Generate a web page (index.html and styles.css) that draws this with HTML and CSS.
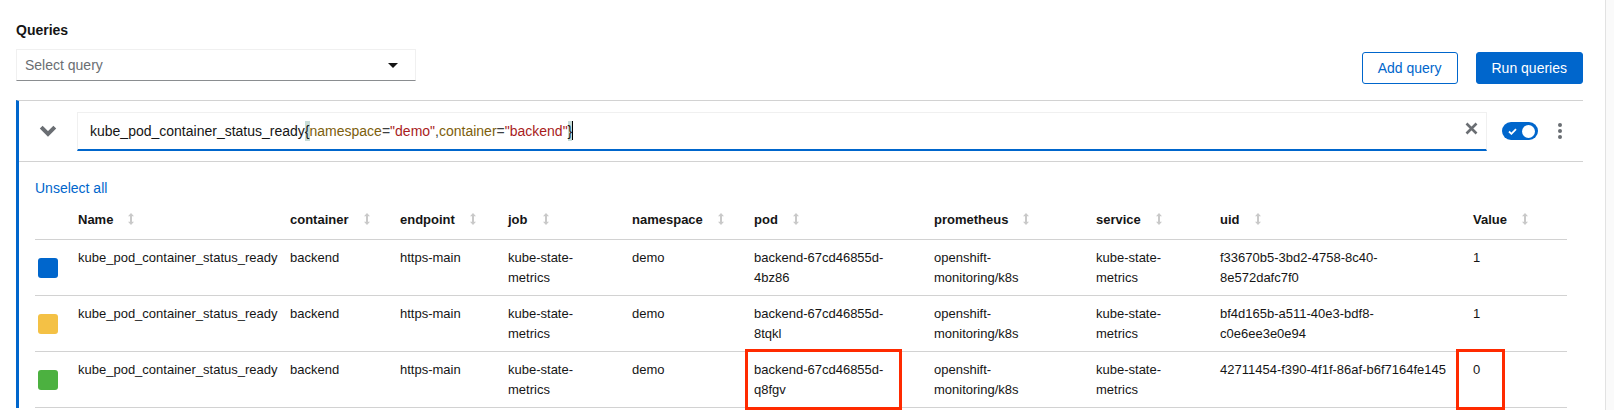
FILE: index.html
```html
<!DOCTYPE html>
<html lang="en">
<head>
<meta charset="utf-8">
<title>Queries</title>
<link rel="stylesheet" href="styles.css">
</head>
<body>
<div class="app">
  <main class="page">
    <div class="toolbar">
      <div class="select-group">
        <h2 class="title">Queries</h2>
        <div class="select">
          <span>Select query</span>
          <svg class="caret" width="10" height="5" viewBox="0 0 10 5"><path d="M0 0H10L5 5Z" fill="#151515"/></svg>
        </div>
      </div>
      <div class="actions">
        <button class="btn btn-secondary">Add query</button>
        <button class="btn btn-primary">Run queries</button>
      </div>
    </div>

    <section class="query-box">
      <div class="query-row">
        <button class="expand" aria-label="Collapse">
          <svg width="18" height="12" viewBox="0 0 18 12"><path d="M2.2 2.2L9 9L15.8 2.2" fill="none" stroke="#6a6e73" stroke-width="4"/></svg>
        </button>
        <div class="query-input">
          <div class="code"><span class="tok-metric">kube_pod_container_status_ready</span><span class="tok-brace">{</span><span class="tok-label">namespace</span><span class="tok-op">=</span><span class="tok-str">"demo"</span><span class="tok-op">,</span><span class="tok-label">container</span><span class="tok-op">=</span><span class="tok-str">"backend"</span><span class="tok-brace">}</span><span class="cursor"></span></div>
          <button class="clear" aria-label="Clear">
            <svg width="13" height="13" viewBox="0 0 13 13"><path d="M1.5 1.5L11.5 11.5M11.5 1.5L1.5 11.5" stroke="#6a6e73" stroke-width="2.6"/></svg>
          </button>
        </div>
        <div class="switch">
          <svg width="9" height="7" viewBox="0 0 9 7"><path d="M1 3.5L3.4 5.8L8 1.2" fill="none" stroke="#fff" stroke-width="1.8"/></svg>
          <span class="knob"></span>
        </div>
        <button class="kebab" aria-label="Actions"><span></span><span></span><span></span></button>
      </div>

      <div class="results">
        <button class="link">Unselect all</button>
        <table class="series">
          <colgroup>
            <col class="w-swatch"><col class="w-name"><col class="w-container"><col class="w-endpoint"><col class="w-job"><col class="w-namespace"><col class="w-pod"><col class="w-prom"><col class="w-service"><col class="w-uid"><col class="w-value">
          </colgroup>
          <thead>
            <tr>
              <th></th>
              <th>Name<svg class="sort" width="6" height="12" viewBox="0 0 6 12"><path d="M3 0L6 3.2H4V8.8H6L3 12L0 8.8H2V3.2H0Z"/></svg></th>
              <th>container<svg class="sort" width="6" height="12" viewBox="0 0 6 12"><path d="M3 0L6 3.2H4V8.8H6L3 12L0 8.8H2V3.2H0Z"/></svg></th>
              <th>endpoint<svg class="sort" width="6" height="12" viewBox="0 0 6 12"><path d="M3 0L6 3.2H4V8.8H6L3 12L0 8.8H2V3.2H0Z"/></svg></th>
              <th>job<svg class="sort" width="6" height="12" viewBox="0 0 6 12"><path d="M3 0L6 3.2H4V8.8H6L3 12L0 8.8H2V3.2H0Z"/></svg></th>
              <th>namespace<svg class="sort" width="6" height="12" viewBox="0 0 6 12"><path d="M3 0L6 3.2H4V8.8H6L3 12L0 8.8H2V3.2H0Z"/></svg></th>
              <th>pod<svg class="sort" width="6" height="12" viewBox="0 0 6 12"><path d="M3 0L6 3.2H4V8.8H6L3 12L0 8.8H2V3.2H0Z"/></svg></th>
              <th>prometheus<svg class="sort" width="6" height="12" viewBox="0 0 6 12"><path d="M3 0L6 3.2H4V8.8H6L3 12L0 8.8H2V3.2H0Z"/></svg></th>
              <th>service<svg class="sort" width="6" height="12" viewBox="0 0 6 12"><path d="M3 0L6 3.2H4V8.8H6L3 12L0 8.8H2V3.2H0Z"/></svg></th>
              <th>uid<svg class="sort" width="6" height="12" viewBox="0 0 6 12"><path d="M3 0L6 3.2H4V8.8H6L3 12L0 8.8H2V3.2H0Z"/></svg></th>
              <th>Value<svg class="sort" width="6" height="12" viewBox="0 0 6 12"><path d="M3 0L6 3.2H4V8.8H6L3 12L0 8.8H2V3.2H0Z"/></svg></th>
            </tr>
          </thead>
          <tbody>
            <tr>
              <td class="swatch-cell"><span class="swatch swatch-blue"></span></td>
              <td class="name-cell">kube_pod_container_status_ready</td>
              <td>backend</td>
              <td>https-main</td>
              <td>kube-state-metrics</td>
              <td>demo</td>
              <td>backend-67cd46855d-4bz86</td>
              <td>openshift-monitoring/k8s</td>
              <td>kube-state-metrics</td>
              <td class="uid-cell">f33670b5-3bd2-4758-8c40-8e572dafc7f0</td>
              <td>1</td>
            </tr>
            <tr>
              <td class="swatch-cell"><span class="swatch swatch-yellow"></span></td>
              <td class="name-cell">kube_pod_container_status_ready</td>
              <td>backend</td>
              <td>https-main</td>
              <td>kube-state-metrics</td>
              <td>demo</td>
              <td>backend-67cd46855d-8tqkl</td>
              <td>openshift-monitoring/k8s</td>
              <td>kube-state-metrics</td>
              <td class="uid-cell">bf4d165b-a511-40e3-bdf8-c0e6ee3e0e94</td>
              <td>1</td>
            </tr>
            <tr>
              <td class="swatch-cell"><span class="swatch swatch-green"></span></td>
              <td class="name-cell">kube_pod_container_status_ready</td>
              <td>backend</td>
              <td>https-main</td>
              <td>kube-state-metrics</td>
              <td>demo</td>
              <td class="flag flag-pod">backend-67cd46855d-q8fgv</td>
              <td>openshift-monitoring/k8s</td>
              <td>kube-state-metrics</td>
              <td class="uid-cell">42711454-f390-4f1f-86af-b6f7164fe145</td>
              <td class="flag flag-value">0</td>
            </tr>
          </tbody>
        </table>
      </div>
    </section>
  </main>
  <div class="scrollbar"></div>
</div>
</body>
</html>
```

FILE: styles.css
```css
* { box-sizing: border-box; }

html, body {
  margin: 0;
  height: 100%;
}

body {
  font-family: "Liberation Sans", Arial, sans-serif;
  color: #151515;
  background: #fff;
  overflow: hidden;
}

button {
  font-family: inherit;
  cursor: pointer;
}

.app {
  display: flex;
  height: 410px;
}

.page {
  flex: 1;
  min-width: 0;
  padding: 20px 22px 0 16px;
}

.scrollbar {
  width: 9px;
  border-left: 1px solid #e2e2e2;
  background: #fafafa;
}

/* toolbar */
.toolbar {
  display: flex;
  justify-content: space-between;
  align-items: flex-end;
}

.title {
  margin: 0 0 8px;
  font-size: 14px;
  font-weight: 700;
  line-height: 21px;
}

.select {
  width: 400px;
  height: 32px;
  margin-bottom: 3px;
  display: flex;
  align-items: center;
  justify-content: space-between;
  padding: 0 17px 0 8px;
  border: 1px solid #f0f0f0;
  border-bottom-color: #8a8d90;
  font-size: 14px;
  color: #6a6e73;
}

.actions {
  display: flex;
  gap: 18px;
}

.btn {
  height: 32px;
  padding: 0 15px;
  font-size: 14px;
  line-height: 30px;
  border-radius: 3px;
  border: 1px solid #0066cc;
}

.btn-secondary {
  background: #fff;
  color: #0066cc;
}

.btn-primary {
  background: #0066cc;
  color: #fff;
}

/* query box */
.query-box {
  margin-top: 16px;
  border-top: 1px solid #d2d2d2;
  border-left: 3px solid #0066cc;
}

.query-row {
  display: flex;
  align-items: center;
  height: 61px;
  padding-right: 11px;
  border-bottom: 1px solid #d2d2d2;
}

.expand {
  width: 58px;
  padding: 0 0 0 20px;
  border: 0;
  background: none;
  display: flex;
}

.query-input {
  flex: 1;
  height: 39px;
  display: flex;
  align-items: center;
  padding: 0 8px 0 12px;
  border: 1px solid #f0f0f0;
  border-bottom: 2px solid #0066cc;
}

.code {
  flex: 1;
  font-size: 14px;
  line-height: 20px;
  white-space: pre;
  display: flex;
  align-items: center;
}

.tok-metric { color: #151515; }
.tok-label { color: #7d5e0b; }
.tok-str { color: #a81c1c; }
.tok-op { color: #3c3f42; }
.tok-brace {
  background: #c8dcd7;
  color: #151515;
}

.cursor {
  width: 1px;
  height: 19px;
  background: #000;
}

.clear {
  border: 0;
  background: none;
  padding: 0;
  margin-bottom: 4px;
  display: flex;
}

.switch {
  margin-left: 15px;
  width: 36px;
  height: 18px;
  border-radius: 9px;
  background: #0066cc;
  display: flex;
  align-items: center;
  justify-content: space-between;
  padding: 0 3px 0 6px;
}

.knob {
  width: 13px;
  height: 13px;
  border-radius: 50%;
  background: #fff;
}

.kebab {
  margin-left: 10px;
  width: 24px;
  padding: 0;
  border: 0;
  background: none;
  display: flex;
  flex-direction: column;
  align-items: center;
  gap: 2px;
}

.kebab span {
  width: 4px;
  height: 4px;
  border-radius: 50%;
  background: #6a6e73;
}

/* results */
.results {
  padding: 16px 16px 0;
}

.link {
  display: block;
  padding: 0;
  border: 0;
  background: none;
  font-size: 14px;
  line-height: 20px;
  color: #0066cc;
}

.series {
  width: 100%;
  border-collapse: collapse;
  table-layout: fixed;
  font-size: 13px;
}

.w-swatch { width: 43px; }
.w-name { width: 212px; }
.w-container { width: 110px; }
.w-endpoint { width: 108px; }
.w-job { width: 124px; }
.w-namespace { width: 122px; }
.w-pod { width: 180px; }
.w-prom { width: 162px; }
.w-service { width: 124px; }
.w-uid { width: 253px; }
.w-value { width: 94px; }

.series th {
  text-align: left;
  font-weight: 700;
  line-height: 20px;
  padding: 12px 0 9px;
  white-space: nowrap;
  border-bottom: 1px solid #d2d2d2;
}

.sort {
  margin-left: 15px;
  vertical-align: -1px;
  fill: #c9c9c9;
}

.series td {
  padding: 8px 24px 7px 0;
  line-height: 20px;
  vertical-align: top;
  border-bottom: 1px solid #d2d2d2;
}

.series td.name-cell { padding-right: 6px; }
.series td.uid-cell { padding-right: 20px; }

.series td.swatch-cell {
  vertical-align: middle;
  padding-left: 3px;
  padding-right: 0;
}

.swatch {
  display: block;
  width: 20px;
  height: 20px;
  border-radius: 3px;
}

.swatch-blue { background: #0066cc; }
.swatch-yellow { background: #f4c145; }
.swatch-green { background: #4cb140; }

/* annotation boxes */
.flag { position: relative; }

.flag::after {
  content: "";
  position: absolute;
  top: -3px;
  height: 55px;
  border: 3px solid #ff2a00;
}

.flag-pod::after {
  left: -9px;
  width: 151px;
}

.flag-value::after {
  left: -17px;
  width: 43px;
}
```
